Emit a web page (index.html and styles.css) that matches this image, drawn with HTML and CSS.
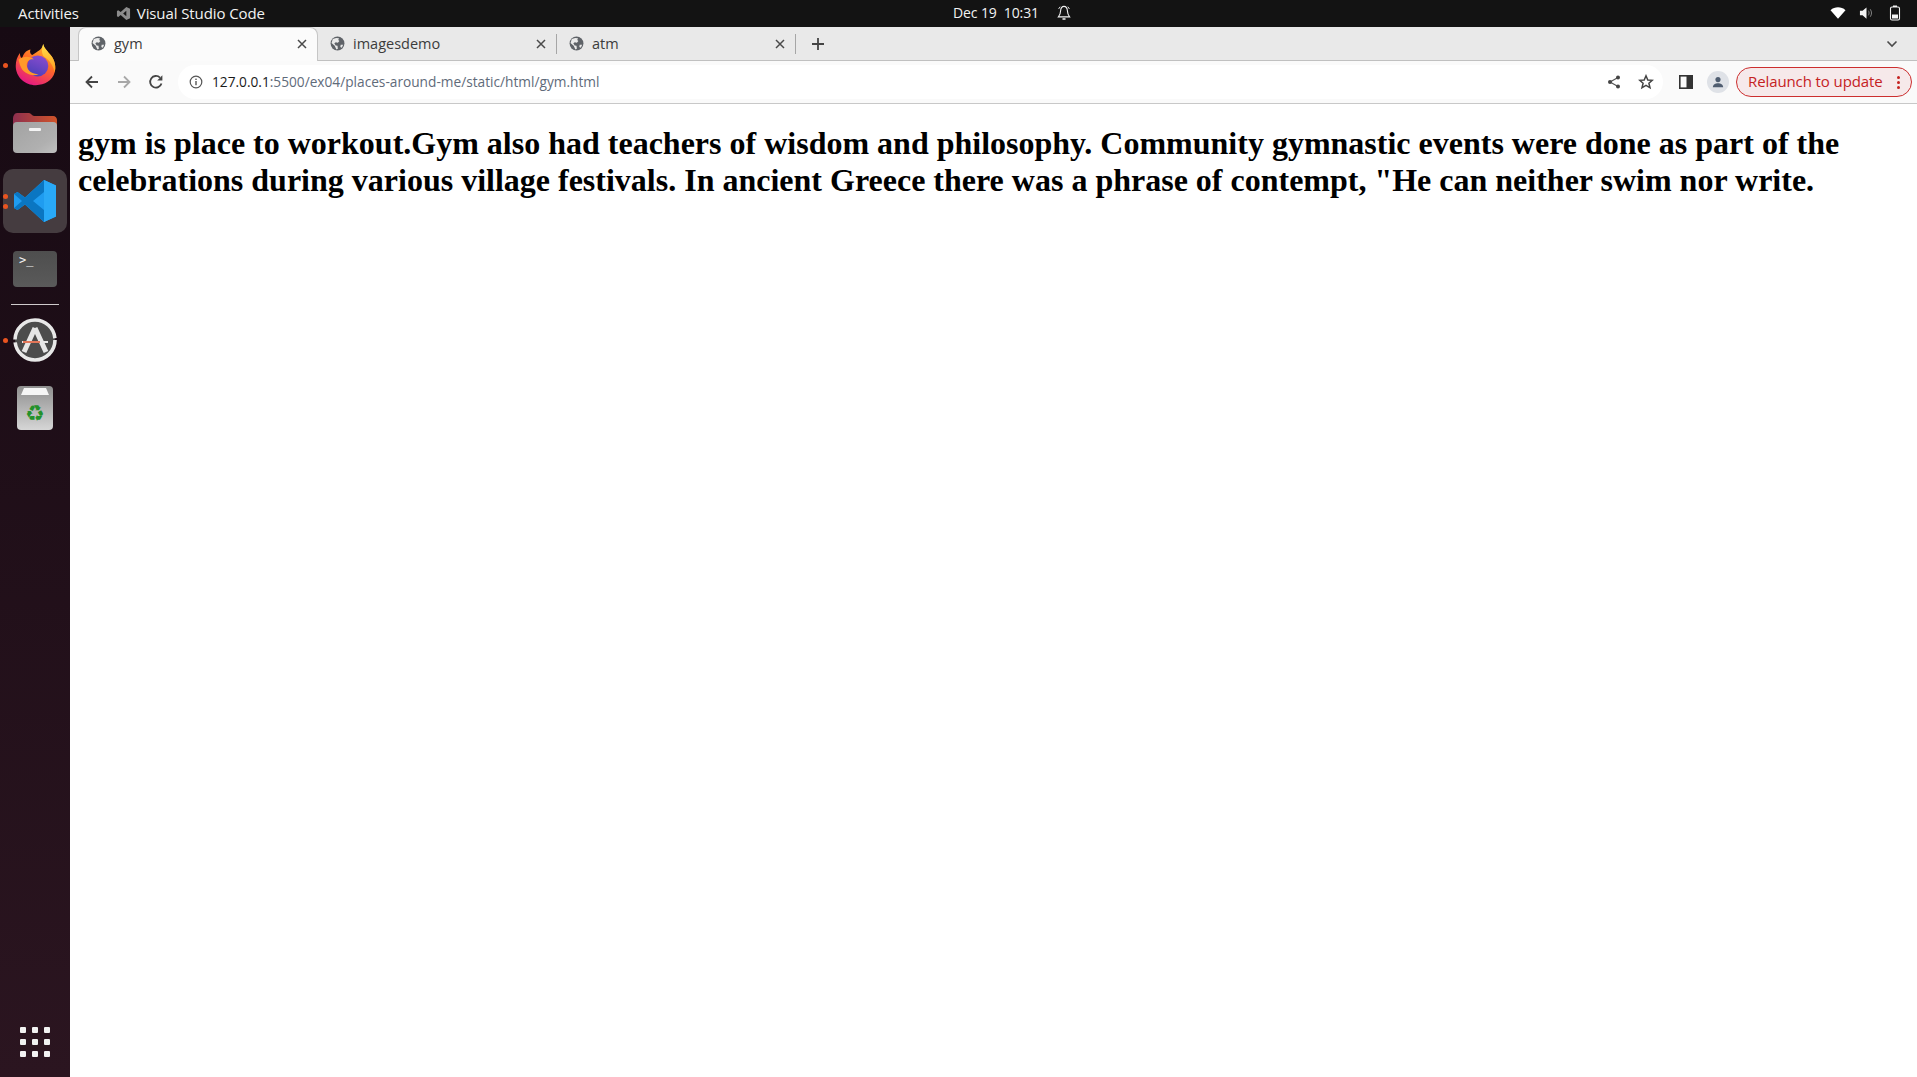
FILE: index.html
```html
<!DOCTYPE html>
<html lang="en">
<head>
<meta charset="utf-8">
<title>gym</title>
<link rel="stylesheet" href="styles.css">
</head>
<body>
<svg class="defs" width="0" height="0" aria-hidden="true">
  <defs>
    <symbol id="globe" viewBox="0 0 16 16">
      <circle cx="8" cy="8" r="7.4" fill="#5f6368"/>
      <path d="M3 3.200 6.600 2 9.600 2.400 8.800 4.200 10 5.400 8.400 7.200 6.200 6.600 4.600 7.800 6 10 8 10.400 8.400 13.600 6.800 14.400 5 10.400 1.600 7.400ZM11.400 9.400 14 9.200 12.600 12.400 11 11.600Z" fill="#eaeaea"/>
    </symbol>
    <symbol id="close" viewBox="0 0 12 12">
      <path d="M2 2 10 10M10 2 2 10" stroke="#4a4a4a" stroke-width="1.500" fill="none"/>
    </symbol>
    <linearGradient id="ffBody" x1="0.8" y1="0" x2="0.3" y2="1">
      <stop offset="0" stop-color="#ffbd2e"/>
      <stop offset="0.45" stop-color="#ff6b25"/>
      <stop offset="1" stop-color="#e31587"/>
    </linearGradient>
    <linearGradient id="ffFlame" x1="0.5" y1="0" x2="0.5" y2="1">
      <stop offset="0" stop-color="#ffe14a"/>
      <stop offset="1" stop-color="#ff9a20"/>
    </linearGradient>
    <linearGradient id="ffCore" x1="0.7" y1="0" x2="0.3" y2="1">
      <stop offset="0" stop-color="#8a4ccf"/>
      <stop offset="1" stop-color="#4a3fb8"/>
    </linearGradient>
    <linearGradient id="folder" x1="0" y1="0" x2="1" y2="1">
      <stop offset="0" stop-color="#a2a2a2"/>
      <stop offset="0.7" stop-color="#b0b0b0"/>
      <stop offset="1" stop-color="#c0c0c0"/>
    </linearGradient>
    <linearGradient id="folderTop" x1="0" y1="0" x2="1" y2="0">
      <stop offset="0" stop-color="#8e2f4f"/>
      <stop offset="1" stop-color="#d0542a"/>
    </linearGradient>
    <linearGradient id="trash" x1="0" y1="0" x2="0" y2="1">
      <stop offset="0" stop-color="#8f8f8f"/>
      <stop offset="1" stop-color="#d6d6d6"/>
    </linearGradient>
  </defs>
</svg>

<header class="topbar">
  <div class="top-left">
    <span class="top-label">Activities</span>
    <span class="top-app">
      <svg class="vs-mini" viewBox="0 0 16 16"><path d="M11 1 15 3V13L11 15 5 9.600 2.400 11.600 1 10.800V5.200L2.400 4.400 5 6.400ZM11 5 7.600 8 11 11Z" fill="#8c8c8c"/></svg>
      <span class="top-label">Visual Studio Code</span>
    </span>
  </div>
  <div class="top-center">
    <span class="top-label top-clock">Dec 19&nbsp;&nbsp;10:31</span>
    <svg class="bell" viewBox="0 0 16 18"><path d="M8 1.400C5.400 1.400 4.400 3.400 4.200 6 4 9.400 3.200 11.600 1.600 13.400H14.400C12.800 11.600 12 9.400 11.800 6 11.600 3.400 10.600 1.400 8 1.400Z" fill="none" stroke="#f2f2f2" stroke-width="1.200"/><path d="M3.600 1.800 1.800 4.400M12.400 1.800 14.200 4.400" stroke="#f2f2f2" stroke-width="1"/><rect x="6" y="15" width="4" height="1.800" rx=".9" fill="#f2f2f2"/></svg>
  </div>
  <div class="top-right">
    <svg class="tray-wifi" viewBox="0 0 16 12"><path d="M0.500 3.200C4.800 -0.600 11.200 -0.600 15.500 3.200L8 11.800Z" fill="#fff"/></svg>
    <svg class="tray-vol" viewBox="0 0 16 14"><path d="M1 4.600H3.800L8 1V13L3.800 9.400H1Z" fill="#f4f4f4"/><path d="M10 4.500C11 6 11 8 10 9.500M12 3C13.800 5.500 13.800 8.500 12 11" stroke="#8a8a8a" stroke-width="1" fill="none"/></svg>
    <svg class="tray-bat" viewBox="0 0 12 16"><rect x="4" y=".5" width="4" height="1.500" fill="#f4f4f4"/><rect x="1.500" y="2" width="9" height="13" rx="1.500" fill="none" stroke="#f4f4f4" stroke-width="1.100"/><rect x="3" y="9.500" width="6" height="4" fill="#f4f4f4"/></svg>
  </div>
</header>

<div class="desktop">
  <nav class="dock">
    <div class="dock-item">
      <span class="run-dots"><i></i></span>
      <svg class="ico-ff" viewBox="0 0 48 48">
        <path d="M33 1C34 6 38 9 41 13 46 19 47 26 45.500 32 43 41 34.500 46 25 46 13 46 3 37 3 25 3 20 4.500 15 7.500 11 7.500 14 8.500 16 10 17 11 12 14 8 19 7 18 10 19 12 21 13 27 9 32 7 33 1Z" fill="url(#ffBody)"/>
        <path d="M33 1C34 6 38 9 41 13 46 19 47 26 45.500 32 44 25 40 19 34 15 31 12 31 6 33 1Z" fill="url(#ffFlame)"/>
        <circle cx="27" cy="25" r="11.500" fill="url(#ffCore)"/>
        <path d="M6 18C11 14 19 14 23 18 18 17 15 20 15 24 15 30 21 34 28 34 22 37 14 34 10 29 8 26 7 22 6 18Z" fill="#ff9a2a"/>
      </svg>
    </div>
    <div class="dock-item">
      <svg class="ico-files" viewBox="0 0 44 40">
        <path d="M0 6C0 3 1.500 0 4 0H16C18 0 19 3 21 3H40C42.500 3 44 5 44 7V20H0Z" fill="url(#folderTop)"/>
        <rect x="0" y="9" width="44" height="31" rx="4" fill="url(#folder)"/>
        <rect x="16" y="15" width="12" height="3" rx="1" fill="#f4f4f4"/>
      </svg>
    </div>
    <div class="dock-item dock-active">
      <span class="run-dots"><i></i><i></i></span>
      <svg class="ico-code" viewBox="0 0 44 44">
        <path d="M31 1 43 6.500V37.500L31 43 12 25.500 4.500 31 1 29V15L4.500 13 12 18.500Z" fill="#1f9cf0"/>
        <path d="M31 1V13L20 22 31 31V43L12 25.500 4.500 31 1 29 9 22 1 15 4.500 13 12 18.500Z" fill="#0a76c2"/>
        <path d="M31 1 43 6.500V37.500L31 43Z" fill="#29a9f7"/>
      </svg>
    </div>
    <div class="dock-item">
      <div class="ico-term"><span class="term-text">&gt;_</span></div>
    </div>
    <div class="dock-sep"></div>
    <div class="dock-item">
      <span class="run-dots"><i></i></span>
      <svg class="ico-upd" viewBox="0 0 44 44">
        <circle cx="22" cy="22" r="20" fill="#4c4c4c"/>
        <circle cx="22" cy="22" r="20" fill="none" stroke="#e8e8e8" stroke-width="3.600" stroke-dasharray="60 3"/>
        <path d="M22 10 11 34M22 10 33 34" stroke="#e6e6e6" stroke-width="5" fill="none"/>
        <path d="M9 24H35" stroke="#e6e6e6" stroke-width="2"/>
        <path d="M10 24H27" stroke="#e0502a" stroke-width="1.500"/>
      </svg>
    </div>
    <div class="dock-item">
      <svg class="ico-trash" viewBox="0 0 36 44">
        <rect x="0" y="0" width="36" height="44" rx="4" fill="url(#trash)"/>
        <path d="M4 9 7 2H29L32 9Z" fill="#f6f6f6"/>
        <text class="recycle" x="18" y="35" text-anchor="middle">♻</text>
      </svg>
    </div>
    <div class="dock-item dock-grid-item">
      <div class="app-grid">
        <i></i><i></i><i></i><i></i><i></i><i></i><i></i><i></i><i></i>
      </div>
    </div>
  </nav>

  <div class="browser">
    <div class="tabstrip">
      <div class="tab tab-active">
        <svg class="tab-globe"><use href="#globe"/></svg>
        <span class="tab-title">gym</span>
        <svg class="tab-close"><use href="#close"/></svg>
      </div>
      <div class="tab">
        <svg class="tab-globe"><use href="#globe"/></svg>
        <span class="tab-title">imagesdemo</span>
        <svg class="tab-close"><use href="#close"/></svg>
        <span class="tab-sep"></span>
      </div>
      <div class="tab">
        <svg class="tab-globe"><use href="#globe"/></svg>
        <span class="tab-title">atm</span>
        <svg class="tab-close"><use href="#close"/></svg>
        <span class="tab-sep"></span>
      </div>
      <svg class="new-tab" viewBox="0 0 14 14"><path d="M7 1V13M1 7H13" stroke="#444" stroke-width="1.800"/></svg>
      <svg class="tab-menu" viewBox="0 0 12 8"><path d="M1.500 1.500 6 6 10.500 1.500" stroke="#4a4a4a" stroke-width="1.600" fill="none"/></svg>
    </div>

    <div class="toolbar">
      <svg class="nav-btn" viewBox="0 0 16 16"><path d="M14 8H3M8 2.500 2.500 8 8 13.500" stroke="#444" stroke-width="1.800" fill="none"/></svg>
      <svg class="nav-btn nav-gap" viewBox="0 0 16 16"><path d="M2 8H13M8 2.500 13.500 8 8 13.500" stroke="#a8a8a8" stroke-width="1.800" fill="none"/></svg>
      <svg class="nav-btn nav-gap" viewBox="0 0 16 16"><path d="M13.500 9.500A5.800 5.800 0 1 1 12 3.600" stroke="#444" stroke-width="1.800" fill="none"/><path d="M14.400 1.200V6.400H9.200Z" fill="#444"/></svg>
      <div class="omnibox">
        <svg class="info" viewBox="0 0 14 14"><circle cx="7" cy="7" r="5.800" fill="none" stroke="#555" stroke-width="1.200"/><rect x="6.300" y="6" width="1.400" height="4.200" fill="#555"/><rect x="6.300" y="3.600" width="1.400" height="1.400" fill="#555"/></svg>
        <span class="url"><span class="url-host">127.0.0.1</span>:5500/ex04/places-around-me/static/html/gym.html</span>
        <svg class="omni-share" viewBox="0 0 14 14"><path d="M11 2.500 3 7 11 11.500" stroke="#555" stroke-width="1.200" fill="none"/><circle cx="11" cy="2.500" r="2" fill="#444"/><circle cx="3" cy="7" r="2" fill="#444"/><circle cx="11" cy="11.500" r="2" fill="#444"/></svg>
        <svg class="omni-star" viewBox="0 0 16 16"><path d="M8 1.800 9.800 6 14.300 6.300 10.900 9.300 12 13.800 8 11.400 4 13.800 5.100 9.300 1.700 6.300 6.200 6Z" fill="none" stroke="#444" stroke-width="1.500"/></svg>
      </div>
      <svg class="side-panel" viewBox="0 0 14 14"><rect x=".8" y=".8" width="12.400" height="12.400" fill="none" stroke="#333" stroke-width="1.600"/><rect x="7.500" y="1" width="6" height="12" fill="#333"/></svg>
      <div class="avatar">
        <svg class="avatar-ico" viewBox="0 0 14 14"><circle cx="7" cy="4.200" r="3" fill="#4f5d70"/><path d="M1 13C1 9.800 4 8.400 7 8.400S13 9.800 13 13Z" fill="#4f5d70"/></svg>
      </div>
      <div class="relaunch">
        <span class="relaunch-text">Relaunch to update</span>
        <span class="kebab"><i></i><i></i><i></i></span>
      </div>
    </div>

    <main class="page">
      <h1 class="headline">gym is place to workout.Gym also had teachers of wisdom and philosophy. Community gymnastic events were done as part of the celebrations during various village festivals. In ancient Greece there was a phrase of contempt, "He can neither swim nor write.</h1>
    </main>
  </div>
</div>
</body>
</html>
```
FILE: styles.css
```css
* { box-sizing: border-box; }
html, body { height: 100%; }
body {
  margin: 0;
  display: flex;
  flex-direction: column;
  overflow: hidden;
  background: #fff;
  font-family: "Open Sans", "Noto Sans", sans-serif;
}
.defs { position: absolute; }

/* GNOME top bar */
.topbar {
  height: 27px;
  flex: none;
  background: #131313;
  color: #f2f2f2;
  display: grid;
  grid-template-columns: 1fr auto 1fr;
  align-items: center;
  padding: 0 16px 1px 18px;
}
.top-label { font-size: 15px; letter-spacing: -0.1px; line-height: 24px; white-space: nowrap; }
.top-clock { font-size: 14px; letter-spacing: -0.1px; }
.top-left { display: flex; align-items: center; gap: 37px; }
.top-app { display: flex; align-items: center; gap: 6px; }
.vs-mini { width: 15px; height: 15px; }
.top-center { display: flex; align-items: center; gap: 18px; padding-left: 105px; }
.bell { width: 14px; height: 16px; }
.top-right { display: flex; align-items: center; justify-content: flex-end; }
.tray-wifi { width: 16px; height: 12px; margin-right: 13px; }
.tray-vol { width: 15px; height: 14px; margin-right: 15px; }
.tray-bat { width: 12px; height: 16px; }

/* Ubuntu dock */
.desktop { flex: 1; display: flex; min-height: 0; }
.dock {
  width: 70px;
  flex: none;
  display: flex;
  flex-direction: column;
  align-items: center;
  gap: 4px;
  padding: 6px 0 3px;
  background: linear-gradient(180deg, #170a13 0%, #2b1520 100%);
}
.dock-item {
  position: relative;
  width: 64px;
  height: 64px;
  flex: none;
  display: flex;
  align-items: center;
  justify-content: center;
  border-radius: 10px;
}
.dock-active { background: #453c40; }
.dock-grid-item { margin-top: auto; }
.dock-sep { width: 48px; height: 1px; background: #cfcacc; flex: none; margin: -1px 0 -1px; }
.run-dots {
  position: absolute;
  left: 0;
  top: 0;
  bottom: 0;
  display: flex;
  flex-direction: column;
  justify-content: center;
  gap: 5px;
}
.run-dots i { display: block; width: 5px; height: 5px; border-radius: 50%; background: #e95420; }
.ico-ff { width: 44px; height: 44px; }
.ico-files { width: 44px; height: 40px; }
.ico-code { width: 44px; height: 44px; }
.ico-term {
  width: 44px;
  height: 36px;
  border-radius: 4px;
  background: linear-gradient(180deg, #4e4e4e, #5a5a5a);
  padding: 0 0 0 6px;
}
.term-text { display: block; color: #f2f2f2; font-family: "DejaVu Sans Mono", monospace; font-size: 12px; line-height: 18px; }
.ico-upd { width: 44px; height: 44px; }
.ico-trash { width: 36px; height: 44px; }
.recycle { font-family: "DejaVu Sans", sans-serif; font-size: 22px; fill: #23912a; }
.app-grid { display: grid; grid-template-columns: repeat(3, 6px); gap: 6px; }
.app-grid i { display: block; width: 6px; height: 6px; border-radius: 1px; background: #f2f2f2; }

/* Browser */
.browser { flex: 1; min-width: 0; display: flex; flex-direction: column; }
.tabstrip {
  height: 34px;
  flex: none;
  display: flex;
  align-items: stretch;
  padding-left: 8px;
  background: #e9e9e9;
  border-bottom: 1px solid #c0c0c0;
}
.tab {
  width: 239px;
  flex: none;
  display: flex;
  align-items: center;
  padding-left: 12px;
  font-size: 14.500px;
  color: #3c3c3c;
}
.tab-active {
  width: 240px;
  height: 34px;
  padding-right: 9px;
  padding-bottom: 2px;
  background: #fbfbfb;
  border: 1px solid #c6c6c6;
  border-bottom: 0;
  border-radius: 8px 8px 0 0;
}
.tab-globe { width: 15px; height: 15px; flex: none; }
.tab-title { flex: 1; margin-left: 8px; white-space: nowrap; }
.tab-close { width: 12px; height: 12px; flex: none; }
.tab-sep { width: 1px; height: 20px; background: #a6a6a6; margin-left: 9px; flex: none; }
.new-tab { width: 14px; height: 14px; flex: none; align-self: center; margin-left: 15px; }
.tab-menu { width: 12px; height: 8px; flex: none; align-self: center; margin-left: auto; margin-right: 19px; }

.toolbar {
  height: 43px;
  flex: none;
  display: flex;
  align-items: center;
  padding: 0 5px 0 14px;
  background: #fafafa;
  border-bottom: 1px solid #c8c8c8;
}
.nav-btn { width: 16px; height: 16px; flex: none; }
.nav-gap { margin-left: 16px; }
.omnibox {
  flex: 1;
  height: 34px;
  margin-left: 14px;
  display: flex;
  align-items: center;
  padding: 0 9px 0 11px;
  background: #fff;
  border-radius: 17px;
  min-width: 0;
}
.info { width: 14px; height: 14px; flex: none; }
.url { flex: 1; margin-left: 9px; margin-bottom: 1px; font-size: 13.700px; color: #5f6b7a; white-space: nowrap; }
.url-host { color: #1a1a1a; }
.omni-share { width: 14px; height: 14px; flex: none; }
.omni-star { width: 16px; height: 16px; flex: none; margin-left: 17px; }
.side-panel { width: 14px; height: 14px; flex: none; margin-left: 16px; }
.avatar {
  width: 22px;
  height: 22px;
  margin-left: 14px;
  flex: none;
  border-radius: 50%;
  background: #dfe2e7;
  display: flex;
  align-items: center;
  justify-content: center;
}
.avatar-ico { width: 12px; height: 12px; }
.relaunch {
  width: 176px;
  height: 30px;
  margin-left: 7px;
  flex: none;
  display: flex;
  align-items: center;
  justify-content: space-between;
  padding: 0 11px 0 11px;
  background: #f6e9ea;
  border: 1px solid #cc2f2f;
  border-radius: 15px;
  color: #c5221f;
  font-size: 15px;
}
.relaunch-text { white-space: nowrap; letter-spacing: -0.100px; line-height: 24px; margin-bottom: 2px; }
.kebab { display: flex; flex-direction: column; gap: 2px; }
.kebab i { display: block; width: 3px; height: 3px; border-radius: 50%; background: #c5221f; }

/* Page content */
.page { flex: 1; background: #fff; padding: 0 8px; }
.headline {
  font-family: "Liberation Serif", serif;
  font-size: 32px;
  font-weight: 700;
  color: #000;
  margin: 21.440px 0;
}
```
